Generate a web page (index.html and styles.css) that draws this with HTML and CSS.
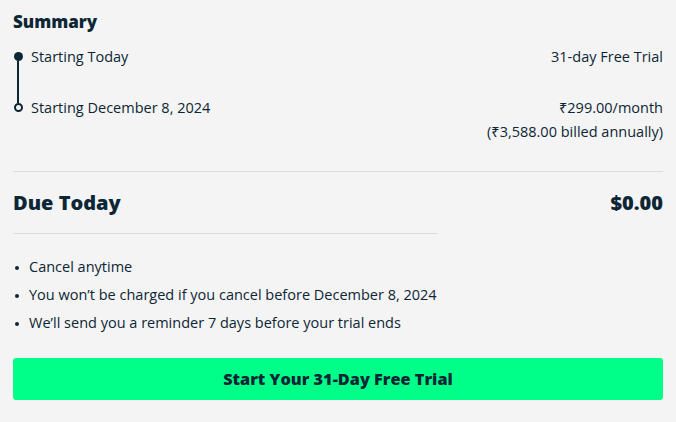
FILE: index.html
```html
<!DOCTYPE html>
<html>
<head>
<meta charset="utf-8">
<link rel="stylesheet" href="styles.css">
</head>
<body>
<div class="page">
  <h2 class="title">Summary</h2>
  <div class="timeline">
    <div class="track">
      <span class="dot filled"></span>
      <span class="line"></span>
      <span class="dot hollow"></span>
    </div>
    <div class="rows">
      <div class="row first">
        <span>Starting Today</span>
        <span class="right">31-day Free Trial</span>
      </div>
      <div class="row second">
        <span>Starting December 8, 2024</span>
        <span class="right">₹299.00/month<br>(₹3,588.00 billed annually)</span>
      </div>
    </div>
  </div>
  <hr class="divider">
  <div class="due">
    <span>Due Today</span>
    <span>$0.00</span>
  </div>
  <hr class="divider short">
  <ul class="bullets">
    <li>Cancel anytime</li>
    <li>You won’t be charged if you cancel before December 8, 2024</li>
    <li>We’ll send you a reminder 7 days before your trial ends</li>
  </ul>
  <button class="cta">Start Your 31-Day Free Trial</button>
</div>
</body>
</html>
```
FILE: styles.css
```css
html, body {
  margin: 0;
  padding: 0;
  background: #f4f4f4;
}
body {
  font-family: "Open Sans", "Noto Sans", sans-serif;
  color: #0d2635;
  width: 676px;
  height: 422px;
  overflow: hidden;
}
.page {
  padding: 10px 13px 0 13px;
}
.title {
  margin: 0;
  font-size: 17px;
  font-weight: 800;
  line-height: 24px;
}
.timeline {
  display: flex;
  margin-top: 11px;
}
.track {
  width: 18px;
  display: flex;
  flex-direction: column;
  align-items: center;
  padding-top: 7px;
  margin-left: -4px;
  margin-right: 4px;
}
.dot {
  width: 9px;
  height: 9px;
  border-radius: 50%;
  box-sizing: border-box;
  flex: none;
}
.dot.filled { background: #0d2635; }
.dot.hollow { border: 2px solid #0d2635; background: #f4f4f4; }
.line {
  width: 2px;
  height: 42px;
  background: #0d2635;
}
.rows {
  flex: 1;
  font-size: 14.5px;
  line-height: 24px;
}
.row {
  display: flex;
  justify-content: space-between;
}
.row.second { margin-top: 27px; }
.right { text-align: right; }
.divider {
  border: none;
  border-top: 1px solid #dcdcdc;
  margin: 27px 0 0 0;
}
.divider.short { width: 424px; margin-top: 18px; }
.due {
  display: flex;
  justify-content: space-between;
  font-size: 20px;
  font-weight: 800;
  line-height: 24px;
  margin-top: 19px;
}
.bullets {
  list-style: none;
  margin: 19px 0 0 0;
  padding: 0 0 0 16px;
  font-size: 14.5px;
  line-height: 28px;
}
.bullets li { position: relative; }
.bullets li::before {
  content: "";
  position: absolute;
  left: -14px;
  top: 13px;
  width: 4px;
  height: 4px;
  border-radius: 50%;
  background: #0d2635;
}
.cta {
  display: block;
  width: 100%;
  height: 42px;
  margin-top: 21px;
  border: none;
  border-radius: 3px;
  background: #00ff88;
  color: #0d2635;
  font-family: inherit;
  font-size: 16.3px;
  font-weight: 800;
}
```
